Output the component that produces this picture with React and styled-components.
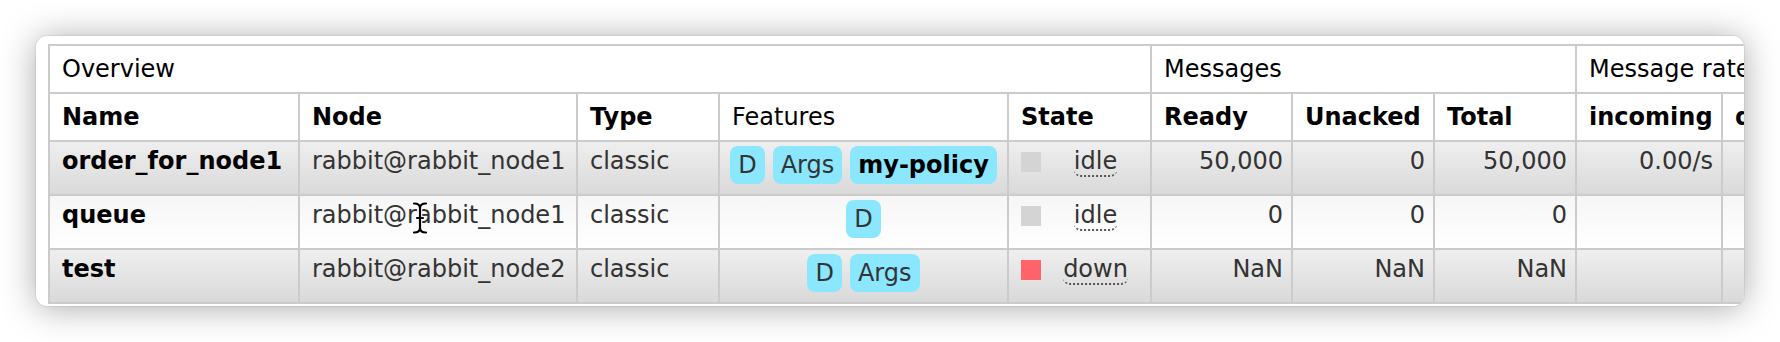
import React from 'react';
import styled, { createGlobalStyle, css } from 'styled-components';

const GlobalStyle = createGlobalStyle`
  html, body {
    margin: 0;
    padding: 0;
    background: #fff;
  }
  body {
    width: 1780px;
    height: 342px;
    overflow: hidden;
    font-family: 'DejaVu Sans', Verdana, sans-serif;
  }
`;

const columns = [250, 278, 142, 289, 143, 141, 142, 142, 146, 220, 146];

const queues = [
  {
    name: 'order_for_node1',
    node: 'rabbit@rabbit_node1',
    type: 'classic',
    features: [{ label: 'D' }, { label: 'Args' }, { label: 'my-policy', policy: true }],
    state: 'idle',
    ready: '50,000',
    unacked: '0',
    total: '50,000',
    incoming: '0.00/s',
  },
  {
    name: 'queue',
    node: 'rabbit@rabbit_node1',
    type: 'classic',
    features: [{ label: 'D' }],
    state: 'idle',
    ready: '0',
    unacked: '0',
    total: '0',
    incoming: '',
  },
  {
    name: 'test',
    node: 'rabbit@rabbit_node2',
    type: 'classic',
    features: [{ label: 'D' }, { label: 'Args' }],
    state: 'down',
    ready: 'NaN',
    unacked: 'NaN',
    total: 'NaN',
    incoming: '',
  },
];

const beam =
  'M3 2.5 Q9 2.5 9 7 Q9 2.5 15 2.5 M9 7 V27 M3 31.5 Q9 31.5 9 27 Q9 31.5 15 31.5 M6 17 H12';

const App = () => (
  <>
    <GlobalStyle />
    <Stage>
      <Window>
        <Table>
          <colgroup>
            {columns.map((w, i) => (
              <Col key={i} $width={w} />
            ))}
          </colgroup>
          <thead>
            <HeadRow>
              <GroupHead colSpan={5}>Overview</GroupHead>
              <GroupHead colSpan={3}>Messages</GroupHead>
              <GroupHead colSpan={3}>Message rates</GroupHead>
            </HeadRow>
            <HeadRow>
              <ColHead>Name</ColHead>
              <ColHead>Node</ColHead>
              <ColHead>Type</ColHead>
              <ColHead $plain>Features</ColHead>
              <ColHead>State</ColHead>
              <ColHead>Ready</ColHead>
              <ColHead>Unacked</ColHead>
              <ColHead>Total</ColHead>
              <ColHead>incoming</ColHead>
              <ColHead>deliver / get</ColHead>
              <ColHead>ack</ColHead>
            </HeadRow>
          </thead>
          <tbody>
            {queues.map((q, i) => (
              <Row key={q.name} $alt={i % 2 === 0}>
                <Cell $bold>{q.name}</Cell>
                <Cell>{q.node}</Cell>
                <Cell>{q.type}</Cell>
                <Cell>
                  <Features>
                    {q.features.map(f => (
                      <Badge key={f.label} $policy={f.policy}>
                        {f.label}
                      </Badge>
                    ))}
                  </Features>
                </Cell>
                <Cell>
                  <StateBox>
                    <StatusDot $down={q.state === 'down'} />
                    <StateText>
                      <Abbr>{q.state}</Abbr>
                    </StateText>
                  </StateBox>
                </Cell>
                <Cell $right>{q.ready}</Cell>
                <Cell $right>{q.unacked}</Cell>
                <Cell $right>{q.total}</Cell>
                <Cell $right>{q.incoming}</Cell>
                <Cell $right />
                <Cell $right />
              </Row>
            ))}
          </tbody>
        </Table>
        <Cursor width="18" height="34" viewBox="0 0 18 34">
          <path d={beam} fill="none" stroke="#fff" strokeWidth="4.5" strokeLinecap="round" />
          <path d={beam} fill="none" stroke="#000" strokeWidth="2.2" strokeLinecap="round" />
        </Cursor>
      </Window>
    </Stage>
  </>
);

const Stage = styled.div`
  padding: 36px;
  height: 342px;
  box-sizing: border-box;
`;

const Window = styled.div`
  position: relative;
  height: 270px;
  box-sizing: border-box;
  padding: 8px 0 0 12px;
  background: #fff;
  border-radius: 11px;
  overflow: hidden;
  box-shadow: 0 0 0 1px rgba(0, 0, 0, 0.06), 0 2px 34px rgba(0, 0, 0, 0.34);
`;

const Table = styled.table`
  width: 2041px;
  table-layout: fixed;
  border-collapse: separate;
  border-spacing: 0;
  border-top: 2px solid #cbcbcb;
  border-left: 2px solid #cbcbcb;
  font-size: 24px;
  line-height: 28px;
  color: #333;
`;

const Col = styled.col`
  width: ${props => props.$width}px;
`;

const HeadRow = styled.tr`
  height: 48px;
`;

const headCell = css`
  box-sizing: border-box;
  padding: 0 12px;
  border-right: 2px solid #cbcbcb;
  border-bottom: 2px solid #cbcbcb;
  background: #fff;
  color: #000;
  text-align: left;
  vertical-align: middle;
  white-space: nowrap;
  overflow: hidden;
`;

const GroupHead = styled.th`
  ${headCell};
  font-weight: normal;
`;

const ColHead = styled.th`
  ${headCell};
  font-weight: ${props => (props.$plain ? 'normal' : 'bold')};
`;

const Row = styled.tr`
  height: 54px;
  & > td {
    background: ${props =>
      props.$alt
        ? 'linear-gradient(#efefef, #d9d9d9)'
        : 'linear-gradient(#f6f6f6, #ffffff)'};
  }
`;

const Cell = styled.td`
  box-sizing: border-box;
  padding: ${props => (props.$right ? '5px 8px 0 12px' : '5px 12px 0')};
  border-right: 2px solid #cbcbcb;
  border-bottom: 2px solid #cbcbcb;
  vertical-align: top;
  white-space: nowrap;
  text-align: ${props => (props.$right ? 'right' : 'left')};
  font-weight: ${props => (props.$bold ? 'bold' : 'normal')};
  color: ${props => (props.$bold ? '#000' : '#333')};
`;

const Features = styled.div`
  display: flex;
  justify-content: center;
  gap: 8px;
  margin-top: -1px;
`;

const Badge = styled.span`
  display: inline-block;
  padding: 5px 8px;
  border-radius: 8px;
  background: #8ae7fe;
  color: ${props => (props.$policy ? '#000' : '#333')};
  font-weight: ${props => (props.$policy ? 'bold' : 'normal')};
`;

const StateBox = styled.div`
  display: flex;
  align-items: flex-start;
`;

const StatusDot = styled.span`
  flex: none;
  width: 20px;
  height: 20px;
  margin-top: 5px;
  background: ${props => (props.$down ? '#fe6469' : '#d4d4d4')};
`;

const StateText = styled.span`
  flex: 1;
  margin-left: 12px;
  text-align: center;
`;

const Abbr = styled.abbr`
  display: inline-block;
  text-decoration: none;
  border-bottom: 2px dotted #555;
  border-radius: 0 0 7px 7px;
`;

const Cursor = styled.svg`
  position: absolute;
  left: 375px;
  top: 165px;
`;

export default App;
